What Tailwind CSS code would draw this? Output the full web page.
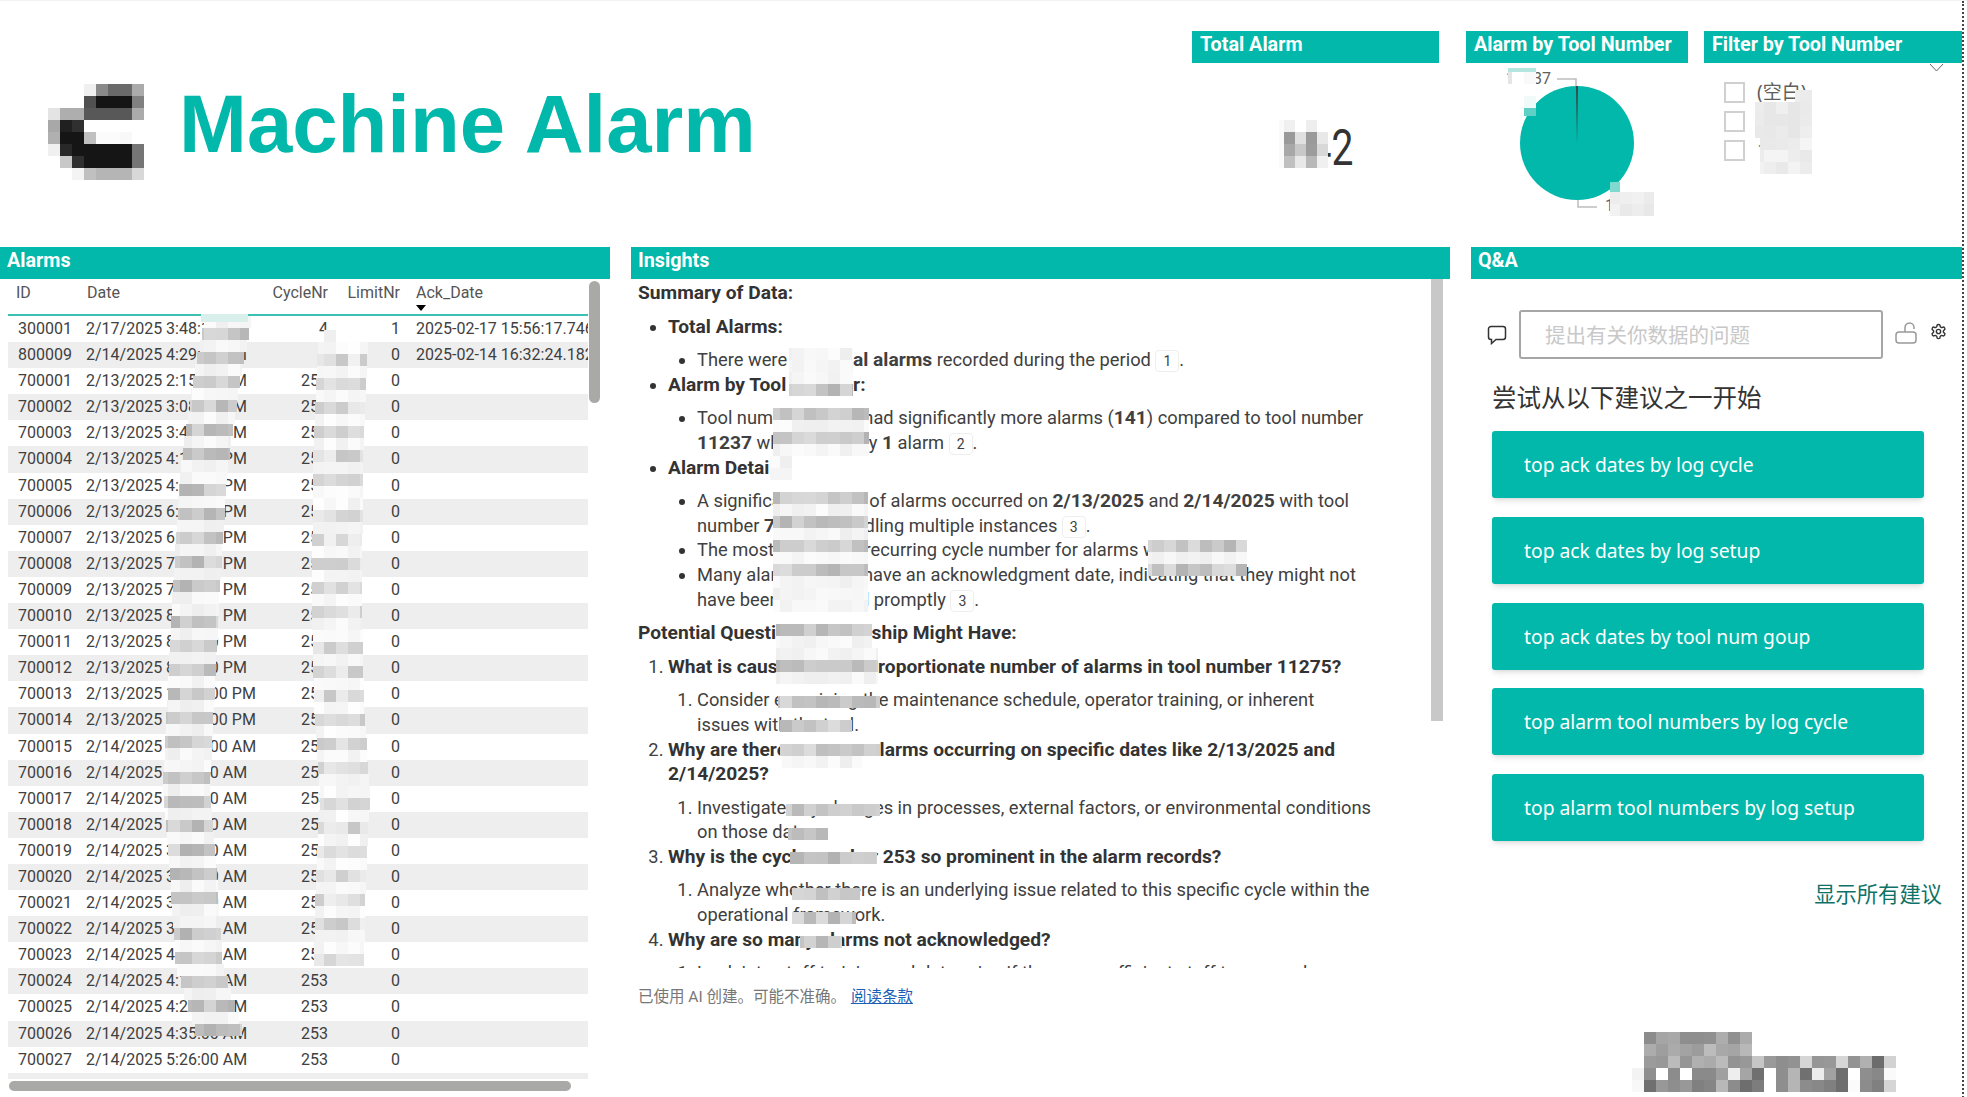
<!DOCTYPE html>
<html lang="zh">
<head>
  <meta charset="UTF-8"/>
  <title>Machine Alarm</title>
  <script src="https://cdn.jsdelivr.net/npm/@tailwindcss/browser@4"></script>
</head>
<body class="bg-white font-['Roboto','Noto_Sans_CJK_SC',sans-serif] text-[#404040] overflow-hidden">
<div class="relative w-[1967px] h-[1097px] overflow-hidden border-t border-[#f2f2f2]">

  <!-- Top row -->
  <div class="flex h-[246px]">
    <div class="flex items-start w-[1192px] pl-[48px] pt-[83px]">
      <svg id="logo" class="w-[96px] h-[96px] shrink-0" viewBox="0 0 96 96"></svg>
      <h1 class="ml-[35px] -mt-[1px] font-['Liberation_Sans',sans-serif] font-bold text-[81.5px] leading-none text-[#01b8aa] whitespace-nowrap">Machine Alarm</h1>
    </div>

    <div class="w-[247px] pt-[30px]">
      <div class="h-[32px] bg-[#01b8aa] pl-[8px] text-white font-bold text-[19.750px] leading-[28px]">Total Alarm</div>
      <div class="flex justify-end pr-[86px] mt-[55px]">
        <span class="inline-block origin-right scale-x-[.78] text-[50px] leading-[60px] text-[#333]">142</span>
      </div>
    </div>

    <div class="w-[222px] ml-[27px] pt-[30px]">
      <div class="h-[32px] bg-[#01b8aa] pl-[8px] text-white font-bold text-[19.750px] leading-[28px] whitespace-nowrap">Alarm by Tool Number</div>
      <svg class="block" width="222" height="152" viewBox="0 0 222 152">
        <circle cx="111" cy="80" r="57" fill="#01b8aa"/>
        <polygon points="110,23 112,23 111,80" fill="#374649"/>
        <path d="M91 16H110V23M112 137V144H131" fill="none" stroke="#bdbdbd" stroke-width="1.5"/>
        <text x="85" y="21" text-anchor="end" font-size="16" fill="#605e5c">11237</text>
        <text x="139" y="148" font-size="16" fill="#605e5c">11275</text>
      </svg>
    </div>

    <div class="relative w-[258px] ml-[16px] pt-[30px]">
      <div class="h-[32px] bg-[#01b8aa] pl-[8px] text-white font-bold text-[19.750px] leading-[28px] whitespace-nowrap">Filter by Tool Number</div>
      <svg class="absolute left-[225px] top-[62px]" width="15" height="9" viewBox="0 0 15 9"><path d="M1 1L7.500 8L14 1" fill="none" stroke="#666" stroke-width="1"/></svg>
      <div class="pl-[20px] pt-[19px] flex flex-col gap-[9px] font-['Noto_Sans','Noto_Sans_CJK_SC',sans-serif] text-[19px] text-[#605e5c]">
        <div class="flex items-center gap-[12px] h-[20px]"><span class="w-[21px] h-[21px] border-2 border-[#d0d0d0]"></span><span>(空白)</span></div>
        <div class="flex items-center gap-[12px] h-[20px]"><span class="w-[21px] h-[21px] border-2 border-[#d0d0d0]"></span><span>11237</span></div>
        <div class="flex items-center gap-[12px] h-[20px]"><span class="w-[21px] h-[21px] border-2 border-[#d0d0d0]"></span><span>11275</span></div>
      </div>
    </div>
  </div>

  <!-- Bottom row -->
  <div class="flex h-[850px]">

    <!-- Alarms -->
    <section class="w-[610px] shrink-0">
      <div class="h-[32px] bg-[#01b8aa] pl-[7px] text-white font-bold text-[19.750px] leading-[28px]">Alarms</div>
      <div class="relative h-[818px]">
        <div class="w-[580px] ml-[8px] h-[800px] overflow-hidden text-[16px]">
          <div class="flex h-[37px] border-b-2 border-[#3cc0b4] text-[#555] leading-[28px]">
            <div class="w-[78px] pl-[8px]">ID</div>
            <div class="w-[177px] pl-[1px]">Date</div>
            <div class="w-[65px] text-right">CycleNr</div>
            <div class="w-[72px] text-right">LimitNr</div>
            <div class="relative w-[188px] pl-[16px]">Ack_Date
              <span class="absolute left-[16px] top-[26px] w-0 h-0 border-x-[5px] border-t-[6px] border-x-transparent border-t-black"></span>
            </div>
          </div>
          <div id="rows"></div>
        </div>
        <div class="absolute left-[589px] top-[2px] w-[11px] h-[122px] rounded-full bg-[#a9a9a7]"></div>
        <div class="absolute left-[9px] top-[802px] w-[562px] h-[10px] rounded-full bg-[#a9a9a7]"></div>
      </div>
    </section>

    <!-- Insights -->
    <section class="w-[819px] ml-[21px] shrink-0">
      <div class="h-[32px] bg-[#01b8aa] pl-[7px] text-white font-bold text-[19.750px] leading-[28px]">Insights</div>
      <div class="relative h-[689px] overflow-hidden pl-[7px] pt-[2px] text-[18.300px] leading-[24.6px] whitespace-nowrap [&_b]:text-[19.2px]">
        <div class="absolute left-[800px] top-0 w-[12px] h-[442px] bg-[#c8c8c8]"></div>
        <p class="font-bold text-[19.2px] text-[#333]">Summary of Data:</p>
        <ul class="mt-[9px] list-disc pl-[30px] marker:text-[#333]">
          <li><b class="text-[#333]">Total Alarms:</b>
            <ul class="mt-[9px] list-disc pl-[29px]">
              <li>There were <b>142 total alarms</b> recorded during the period <span class="inline-block px-[7px] leading-[20px] text-[14px] border border-[#eee] rounded-[4px]">1</span>.</li>
            </ul>
          </li>
          <li><b class="text-[#333]">Alarm by Tool Number:</b>
            <ul class="mt-[9px] list-disc pl-[29px]">
              <li>Tool number <b>11275</b> had significantly more alarms (<b>141</b>) compared to tool number<br><b>11237</b> which had only <b>1</b> alarm <span class="inline-block px-[7px] leading-[20px] text-[14px] border border-[#eee] rounded-[4px]">2</span>.</li>
            </ul>
          </li>
          <li><b class="text-[#333]">Alarm Details:</b>
            <ul class="mt-[9px] list-disc pl-[29px]">
              <li>A significant number of alarms occurred on <b>2/13/2025</b> and <b>2/14/2025</b> with tool<br>number <b>700001</b> handling multiple instances <span class="inline-block px-[7px] leading-[20px] text-[14px] border border-[#eee] rounded-[4px]">3</span>.</li>
              <li>The most frequently recurring cycle number for alarms was <b>253</b>.</li>
              <li>Many alarms do not have an acknowledgment date, indicating that they might not<br>have been addressed promptly <span class="inline-block px-[7px] leading-[20px] text-[14px] border border-[#eee] rounded-[4px]">3</span>.</li>
            </ul>
          </li>
        </ul>
        <p class="mt-[9px] font-bold text-[19.2px] text-[#333]">Potential Questions Leadership Might Have:</p>
        <ol class="mt-[9px] list-decimal pl-[30px]">
          <li><b class="text-[#333]">What is causing the disproportionate number of alarms in tool number 11275?</b>
            <ol class="mt-[9px] list-decimal pl-[29px]">
              <li>Consider examining the maintenance schedule, operator training, or inherent<br>issues with the tool.</li>
            </ol>
          </li>
          <li><b class="text-[#333]">Why are there so many alarms occurring on specific dates like 2/13/2025 and<br>2/14/2025?</b>
            <ol class="mt-[9px] list-decimal pl-[29px]">
              <li>Investigate any changes in processes, external factors, or environmental conditions<br>on those dates.</li>
            </ol>
          </li>
          <li><b class="text-[#333]">Why is the cycle number 253 so prominent in the alarm records?</b>
            <ol class="mt-[9px] list-decimal pl-[29px]">
              <li>Analyze whether there is an underlying issue related to this specific cycle within the<br>operational framework.</li>
            </ol>
          </li>
          <li><b class="text-[#333]">Why are so many alarms not acknowledged?</b>
            <ol class="mt-[9px] list-decimal pl-[29px]">
              <li>Look into staff training and determine if there are sufficient staff to respond.</li>
            </ol>
          </li>
        </ol>
      </div>
      <p class="mt-[18px] pl-[7px] text-[15.500px] text-[#777]">已使用 AI 创建。可能不准确。 <a class="ml-[1px] text-[#1a5fb4] underline">阅读条款</a></p>
    </section>

    <!-- Q&A -->
    <section class="w-[491px] ml-[21px] shrink-0 font-['Noto_Sans','Noto_Sans_CJK_SC',sans-serif]">
      <div class="h-[32px] bg-[#01b8aa] pl-[7px] text-white font-bold text-[19.750px] leading-[28px] font-['Roboto',sans-serif]">Q&amp;A</div>
      <div class="flex items-center mt-[31px] pl-[16px] h-[49px]">
        <svg class="shrink-0" width="20" height="20" viewBox="0 0 20 20"><path d="M4 1.500H16A2.500 2.500 0 0 1 18.500 4V12A2.500 2.500 0 0 1 16 14.500H9L4.500 18.500V14.500H4A2.500 2.500 0 0 1 1.500 12V4A2.500 2.500 0 0 1 4 1.500Z" fill="none" stroke="#333" stroke-width="1.500"/></svg>
        <div class="w-[364px] h-[49px] ml-[12px] border-2 border-[#a6a6a6] rounded-[3px] pl-[24px] text-[20.500px] leading-[46px] text-[#c8c8c8]">提出有关你数据的问题</div>
        <svg class="ml-[12px] -mt-[3px] shrink-0" width="22" height="22" viewBox="0 0 22 22"><rect x="1" y="10" width="20" height="11" rx="3" fill="none" stroke="#999" stroke-width="1.500"/><path d="M10 10V5.500A4.500 4.500 0 0 1 19 5.500V7" fill="none" stroke="#999" stroke-width="1.500"/></svg>
        <svg class="ml-[13px] -mt-[6px] shrink-0" width="17" height="17" viewBox="0 0 24 24" fill="none" stroke="#333" stroke-width="2"><path d="M12.220 2h-.44a2 2 0 0 0-2 2v.18a2 2 0 0 1-1 1.730l-.43.25a2 2 0 0 1-2 0l-.15-.08a2 2 0 0 0-2.730.73l-.22.38a2 2 0 0 0 .73 2.730l.15.1a2 2 0 0 1 1 1.720v.51a2 2 0 0 1-1 1.740l-.15.09a2 2 0 0 0-.73 2.730l.22.38a2 2 0 0 0 2.730.73l.15-.08a2 2 0 0 1 2 0l.43.25a2 2 0 0 1 1 1.730V20a2 2 0 0 0 2 2h.44a2 2 0 0 0 2-2v-.18a2 2 0 0 1 1-1.730l.43-.25a2 2 0 0 1 2 0l.15.08a2 2 0 0 0 2.730-.73l.22-.39a2 2 0 0 0-.73-2.730l-.15-.08a2 2 0 0 1-1-1.740v-.5a2 2 0 0 1 1-1.740l.15-.09a2 2 0 0 0 .73-2.730l-.22-.38a2 2 0 0 0-2.730-.73l-.15.08a2 2 0 0 1-2 0l-.43-.25a2 2 0 0 1-1-1.730V4a2 2 0 0 0-2-2z"/><circle cx="12" cy="12" r="3"/></svg>
      </div>
      <div class="ml-[21px] mt-[21px] text-[24.500px] leading-[36px] text-[#333]">尝试从以下建议之一开始</div>
      <div class="ml-[21px] mt-[15px] w-[432px] flex flex-col gap-[18.75px] text-white text-[19.300px]">
        <div class="h-[67px] flex items-center pl-[32px] pt-[2px] bg-[#01b8aa] rounded-[3px] shadow-md">top ack dates by log cycle</div>
        <div class="h-[67px] flex items-center pl-[32px] pt-[2px] bg-[#01b8aa] rounded-[3px] shadow-md">top ack dates by log setup</div>
        <div class="h-[67px] flex items-center pl-[32px] pt-[2px] bg-[#01b8aa] rounded-[3px] shadow-md">top ack dates by tool num goup</div>
        <div class="h-[67px] flex items-center pl-[32px] pt-[2px] bg-[#01b8aa] rounded-[3px] shadow-md">top alarm tool numbers by log cycle</div>
        <div class="h-[67px] flex items-center pl-[32px] pt-[2px] bg-[#01b8aa] rounded-[3px] shadow-md">top alarm tool numbers by log setup</div>
      </div>
      <div class="w-[471px] mt-[37px] text-right text-[21.300px] leading-[32px] text-[#0e7268]">显示所有建议</div>
    </section>
  </div>

  <!-- page edge, dotted -->
  <div class="absolute left-[1962px] top-0 h-[1097px] border-l-2 border-dotted border-[#444]"></div>
  <!-- pixelated redactions lying over the page -->
  <svg id="mosaics" class="absolute left-0 -top-px pointer-events-none" width="1967" height="1097"></svg>
</div>

<script>
(() => {
  const NS = 'http://www.w3.org/2000/svg';
  const hex = v => '#' + Math.min(255, v).toString(16).padStart(2, '0').repeat(3);
  function rect(svg, x, y, w, h, fill) {
    const r = document.createElementNS(NS, 'rect');
    r.setAttribute('x', x); r.setAttribute('y', y);
    r.setAttribute('width', w); r.setAttribute('height', h);
    r.setAttribute('fill', fill);
    svg.appendChild(r);
  }

  // Table rows
  const data = [
    ['300001','2/17/2025 3:48:17 PM','4','1','2025-02-17 15:56:17.7460000'],
    ['800009','2/14/2025 4:29:10 PM','8','0','2025-02-14 16:32:24.1820000'],
    ['700001','2/13/2025 2:15:00 PM','253','0',''],
    ['700002','2/13/2025 3:08:00 PM','253','0',''],
    ['700003','2/13/2025 3:45:00 PM','253','0',''],
    ['700004','2/13/2025 4:12:00 PM','253','0',''],
    ['700005','2/13/2025 4:50:00 PM','253','0',''],
    ['700006','2/13/2025 6:05:00 PM','253','0',''],
    ['700007','2/13/2025 6:40:00 PM','253','0',''],
    ['700008','2/13/2025 7:10:00 PM','253','0',''],
    ['700009','2/13/2025 7:45:00 PM','253','0',''],
    ['700010','2/13/2025 8:02:00 PM','253','0',''],
    ['700011','2/13/2025 8:20:00 PM','253','0',''],
    ['700012','2/13/2025 8:55:00 PM','253','0',''],
    ['700013','2/13/2025 10:10:00 PM','253','0',''],
    ['700014','2/13/2025 11:30:00 PM','253','0',''],
    ['700015','2/14/2025 12:30:00 AM','253','0',''],
    ['700016','2/14/2025 1:15:00 AM','253','0',''],
    ['700017','2/14/2025 1:50:00 AM','253','0',''],
    ['700018','2/14/2025 2:20:00 AM','253','0',''],
    ['700019','2/14/2025 3:00:00 AM','253','0',''],
    ['700020','2/14/2025 3:15:00 AM','253','0',''],
    ['700021','2/14/2025 3:30:00 AM','253','0',''],
    ['700022','2/14/2025 3:50:00 AM','253','0',''],
    ['700023','2/14/2025 4:05:00 AM','253','0',''],
    ['700024','2/14/2025 4:15:00 AM','253','0',''],
    ['700025','2/14/2025 4:25:00 AM','253','0',''],
    ['700026','2/14/2025 4:35:00 AM','253','0',''],
    ['700027','2/14/2025 5:26:00 AM','253','0',''],
    ['','','','','']
  ];
  document.getElementById('rows').innerHTML = data.map((r, i) => `
    <div class="flex h-[26.1px] leading-[26px] whitespace-nowrap ${i % 2 ? 'bg-[#eeeeee]' : 'bg-white'}">
      <div class="w-[78px] pl-[10px]">${r[0]}</div>
      <div class="w-[177px]">${r[1]}</div>
      <div class="w-[65px] text-right">${r[2]}</div>
      <div class="w-[72px] text-right">${r[3]}</div>
      <div class="w-[188px] pl-[16px] overflow-hidden">${r[4]}</div>
    </div>`).join('');

  // Logo mosaic, 12px cells
  const logo = [
    [255,255,255,240,138,106,106,171],
    [255,255,255,80,21,21,21,128],
    [228,174,174,88,88,88,88,171],
    [168,32,48,255,255,255,255,255],
    [176,21,21,192,251,251,248,255],
    [240,40,21,21,21,21,21,117],
    [255,200,48,21,21,21,21,117],
    [255,255,244,192,181,181,181,216]
  ];
  const logoSvg = document.getElementById('logo');
  logo.forEach((row, y) => row.forEach((v, x) => rect(logoSvg, x * 12, y * 12, 12, 12, hex(v))));

  const m = document.getElementById('mosaics');

  // Footer mosaic
  const foot = [
    [0x8c,0xa5,0xa8,0x8e,0x8e,0x90,0xad,0x90,0xab],
    [0xac,0x9e,0xab,0xa3,0x9c,0xbc,0xa8,0xa5,0xb8],
    [0x9b,0x98,0xbb,0x96,0xb0,0xab,0xbb,0x93,0x98,0xc6,0x9a,0x8e,0x92,0xd6,0x96,0x98,0xd6,0x93,0xb0,0x6c,0xd2],
    [0x8f,0xff,0x8c,0xff,0x8a,0x8a,0xa0,0xee,0xa5,0x70,0xff,0x8e,0xb5,0x70,0xec,0xa2,0x6e,0xff,0x8e,0x88,0xfa],
    [0x70,0x98,0x8e,0x98,0x80,0x85,0xb8,0x8c,0x6e,0x7d,0xff,0x8e,0xb5,0x8c,0x88,0x80,0x6e,0xfb,0x8c,0x80,0xd5]
  ];
  foot.forEach((row, y) => row.forEach((v, x) => rect(m, 1644 + x * 12, 1032 + y * 12, 12, 12, hex(v))));
  rect(m, 1632, 1068, 12, 12, '#f3f3f3');
  rect(m, 1632, 1080, 12, 12, '#f8f8f8');

  // Total Alarm mosaic
  const total = [[0xf0,0xff,0xee,0xff],[0x9a,0xe0,0x9a,0xe8],[0xa8,0xc8,0x9c,0xd8],[0xc0,0xe8,0xb8,0xf0]];
  rect(m, 1279, 120, 49, 48, '#fafafa');
  total.forEach((row, y) => row.forEach((v, x) => rect(m, 1284 + x * 11, 120 + y * 12, 11, 12, hex(v))));

  // Brushed-over blur: cells are darker where they sit on a line of text
  const noise = (x, y) => { const s = Math.sin(x * 12.9898 + y * 78.233) * 43758.5453; return s - Math.floor(s); };
  function brush(x0, x1, y0, y1, lines, darkBase = 176, lightBase = 238) {
    for (let y = y0; y < y1; y += 12) {
      const cy = y + 6;
      const onText = lines.some(l => Math.abs(l - cy) < 6);
      for (let x = Math.floor(x0 / 12) * 12; x < x1; x += 12) {
        const l = Math.max(x, x0), r = Math.min(x + 12, x1);
        const n = noise(x, y);
        const v = onText ? darkBase + Math.round(n * 44) : lightBase + Math.round(n * 14);
        rect(m, l, y, r - l, 12, hex(v));
      }
    }
  }

  const tableLines = data.map((_, i) => 329 + i * 26.1);
  const leftA = [[315,204],[377,193],[445,183],[470,180],[600,172],[700,167],[780,163],[900,172],[960,176],[1030,197]];
  const leftB = [[340,318],[450,313],[600,312],[700,314],[790,320],[870,316],[950,314]];
  const at = (pts, y) => {
    for (let i = 1; i < pts.length; i++) if (y <= pts[i][0]) {
      const [a, b] = [pts[i - 1], pts[i]];
      return a[1] + (b[1] - a[1]) * Math.max(0, y - a[0]) / (b[0] - a[0]);
    }
    return pts[pts.length - 1][1];
  };
  for (let y = 316; y < 1030; y += 12) { const x = Math.round(at(leftA, y)); brush(x, x + 47, y, y + 12, tableLines); }
  rect(m, 201, 314, 47, 8, '#d9efec');
  brush(324, 336, 330, 342, [], 205, 225);
  for (let y = 342; y < 956; y += 12) { const x = Math.round(at(leftB, y)); brush(x, x + 50, y, y + 12, tableLines, 198, 240); }

  const il = [293,327,360,385,418,443,468,501,526,550,575,600,634,667,701,725,750,774,808,833,857,892,917,941];
  [[789,853,348,396],[773,869,408,456],[770,792,456,480],[773,868,492,612],[1148,1247,540,576],
   [776,872,624,648],[776,878,648,684],[778,880,696,708],[780,852,720,732],[780,880,744,756],[782,862,756,768],
   [786,880,804,816],[788,828,828,840],[790,877,852,864],[792,860,888,900],[792,856,912,924],[800,842,936,948]]
    .forEach(b => brush(b[0], b[1], b[2], b[3], il, 178));

  // Top cards
  brush(1508, 1536, 72, 84, [78], 215, 235);
  rect(m, 1508, 68, 28, 4, '#b3e6df');
  rect(m, 1524, 96, 12, 12, '#f0faf9');
  rect(m, 1524, 108, 12, 8, '#5fd0c5');
  rect(m, 1610, 182, 10, 10, '#7fd9cf');
  brush(1610, 1654, 192, 216, [], 220, 230);
  brush(1795, 1812, 90, 102, [], 215, 226);
  brush(1755, 1812, 102, 132, [], 215, 226);
  brush(1760, 1812, 138, 168, [150], 212, 232);
})();
</script>
</body>
</html>
